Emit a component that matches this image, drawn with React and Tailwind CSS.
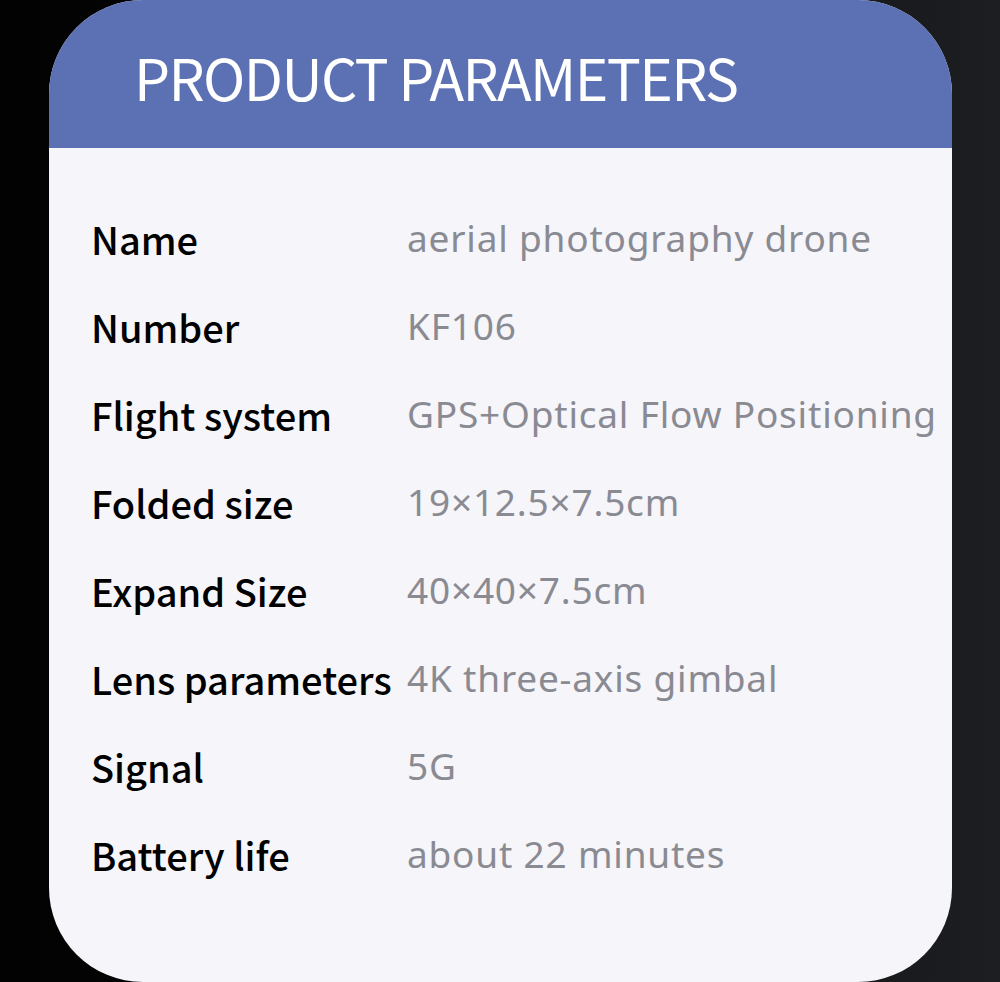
import React from 'react';

const rows = [
  ['Name', 'aerial photography drone'],
  ['Number', 'KF106'],
  ['Flight system', 'GPS+Optical Flow Positioning'],
  ['Folded size', '19×12.5×7.5cm'],
  ['Expand Size', '40×40×7.5cm'],
  ['Lens parameters', '4K three-axis gimbal'],
  ['Signal', '5G'],
  ['Battery life', 'about 22 minutes'],
];

function App() {
  return (
    <div className="w-[1000px] h-[982px] overflow-hidden bg-gradient-to-r from-[#020202] via-[#0e0e10] to-[#1d1e21] pl-[49px] pr-[48px]">
      <div className="h-[982px] rounded-[94px] overflow-hidden bg-[#f5f5fa] flex flex-col">
        <div className="h-[148px] bg-[#5c70b4] flex items-center pl-[85px] pt-[4px]">
          <h1 className="text-white text-[57px] leading-none font-normal tracking-[-1.6px] font-['Noto_Sans_CJK_SC','Noto_Sans',sans-serif]">
            PRODUCT PARAMETERS
          </h1>
        </div>
        <div className="pt-[46px] pl-[42px] flex flex-col">
          {rows.map(([label, value]) => (
            <div key={label} className="h-[88px] flex items-center">
              <div className="w-[316px] text-black text-[38px] font-['Noto_Sans_CJK_SC','Noto_Sans',sans-serif] font-medium">
                {label}
              </div>
              <div className="text-[#8a8a92] text-[37px] tracking-[0.8px] font-['Noto_Sans','Open_Sans',sans-serif]">
                {value}
              </div>
            </div>
          ))}
        </div>
      </div>
    </div>
  );
}

export default App;
